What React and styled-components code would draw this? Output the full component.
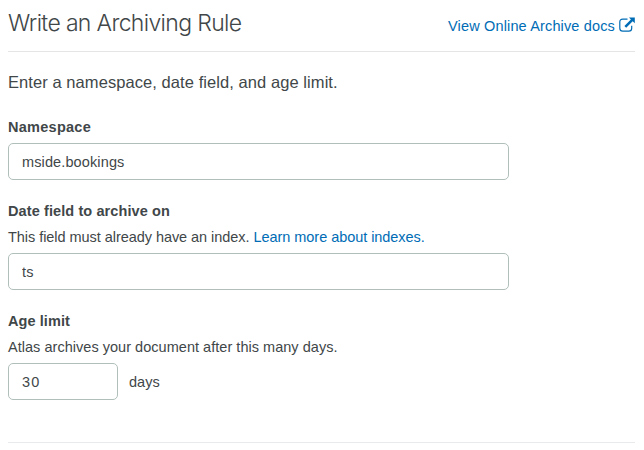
import React from "react";
import styled, { createGlobalStyle } from "styled-components";

const GlobalStyle = createGlobalStyle`
  * { box-sizing: border-box; }
  body {
    margin: 0;
    background: #fff;
    color: #414749;
    font-family: "Liberation Sans", Arial, sans-serif;
    font-size: 14.5px;
    line-height: 20px;
  }
`;

const Page = styled.main`
  width: 644px;
  height: 450px;
  padding: 0 9px 0 8px;
  overflow: hidden;
`;

const Header = styled.header`
  display: flex;
  justify-content: space-between;
  height: 52px;
  border-bottom: 1px solid #e3e5e6;
`;

const Title = styled.h1`
  margin: 8px 0 0;
  font-family: Inter, "Liberation Sans", sans-serif;
  font-size: 23px;
  font-weight: 300;
  line-height: 30px;
  letter-spacing: -0.65px;
  white-space: nowrap;
`;

const Link = styled.a`
  color: #006cb5;
  text-decoration: none;
`;

const DocsLink = styled(Link)`
  display: flex;
  height: 20px;
  margin-top: 16px;
  gap: 4px;
  letter-spacing: 0.15px;
  white-space: nowrap;
`;

const OpenIcon = styled.svg`
  width: 16px;
  height: 16px;
  margin-top: 1px;
`;

const Intro = styled.p`
  margin: 18px 0 0;
  font-size: 16.5px;
  line-height: 24px;
  letter-spacing: 0.07px;
`;

const Field = styled.section`
  margin-top: ${(p) => p.$gap};
`;

const Label = styled.label`
  display: block;
  font-weight: 700;
  line-height: 20px;
  letter-spacing: ${(p) => p.$spacing};
`;

const Help = styled.p`
  margin: 6px 0 0;
  line-height: 20px;
  letter-spacing: ${(p) => p.$spacing};
  white-space: nowrap;
`;

const Input = styled.input`
  display: block;
  width: ${(p) => p.$width};
  height: 37px;
  padding: 1px 13px 0;
  border: 1px solid #b0bfba;
  border-radius: 5px;
  background: #fff;
  color: inherit;
  font: inherit;
  letter-spacing: ${(p) => p.$spacing || "0.12px"};
  outline: none;
`;

const ControlRow = styled.div`
  display: flex;
  align-items: center;
  gap: 11px;
  margin-top: 6px;
`;

const Unit = styled.span`
  padding-top: 1px;
`;

const Footer = styled.footer`
  margin-top: 42px;
  border-top: 1px solid #e8eaeb;
`;

export default function App() {
  return (
    <>
      <GlobalStyle />
      <Page>
        <Header>
          <Title>Write an Archiving Rule</Title>
          <DocsLink href="#">
            <span>View Online Archive docs</span>
            <OpenIcon viewBox="0 0 16 16" fill="none">
              <path d="M8.5 2.1H3.8Q0.8 2.1 0.8 5V11.2Q0.8 14.1 3.8 14.1H9.8Q12.7 14.1 12.7 11.2V8.8" stroke="currentColor" strokeWidth="1.2" />
              <path d="M10 0.4H15.8V6.2L13.7 4.2L7.2 10.7L5.4 8.9L11.9 2.4Z" fill="currentColor" />
            </OpenIcon>
          </DocsLink>
        </Header>
        <Intro>Enter a namespace, date field, and age limit.</Intro>
        <Field $gap="23px">
          <Label htmlFor="namespace" $spacing="0.27px">Namespace</Label>
          <ControlRow>
            <Input id="namespace" $width="501px" defaultValue="mside.bookings" />
          </ControlRow>
        </Field>
        <Field $gap="21px">
          <Label htmlFor="datefield" $spacing="0.1px">Date field to archive on</Label>
          <Help $spacing="-0.05px">
            This field must already have an index. <Link href="#">Learn more about indexes.</Link>
          </Help>
          <ControlRow>
            <Input id="datefield" $width="501px" defaultValue="ts" />
          </ControlRow>
        </Field>
        <Field $gap="21px">
          <Label htmlFor="age" $spacing="0.08px">Age limit</Label>
          <Help $spacing="0.03px">Atlas archives your document after this many days.</Help>
          <ControlRow>
            <Input id="age" $width="110px" defaultValue="30" $spacing="1.3px" />
            <Unit>days</Unit>
          </ControlRow>
        </Field>
        <Footer />
      </Page>
    </>
  );
}
